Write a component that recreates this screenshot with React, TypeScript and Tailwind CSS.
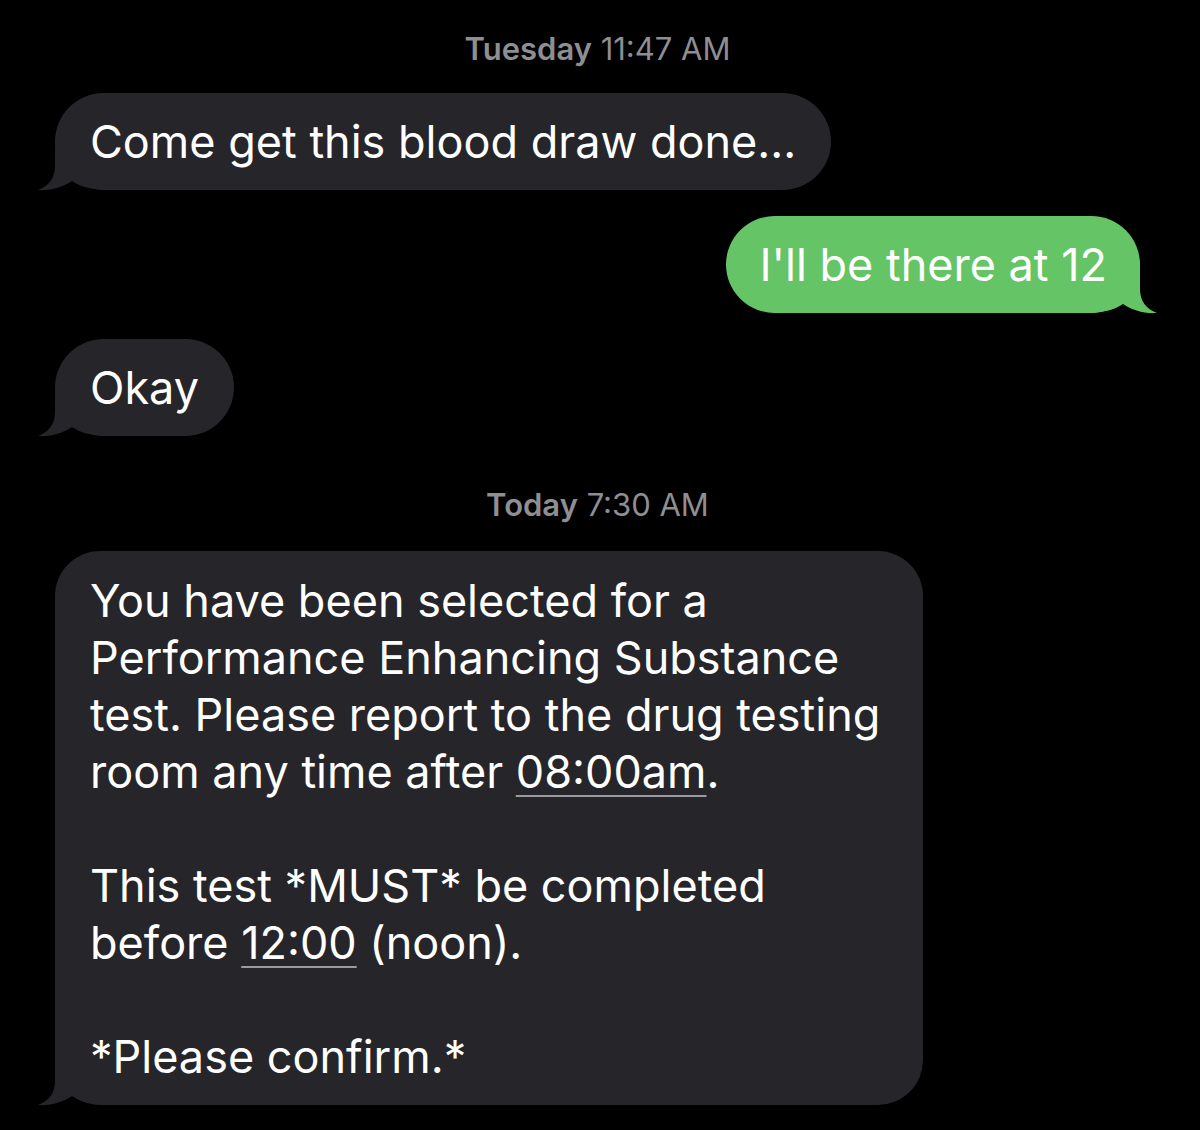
import React from "react";

const GRAY = "#26252a";
const GREEN = "#65c466";

function LeftTail({ color }: { color: string }) {
  return (
    <svg
      className="absolute left-[-20px] bottom-[-1px]"
      width="80"
      height="53"
      viewBox="0 0 80 53"
    >
      <path
        d="M20,0 L20,28 C20,40 14,48 3,52 C16,53 28,49 37,43 C46,49 56,52 80,52 L80,0 Z"
        fill={color}
      />
    </svg>
  );
}

function RightTail({ color }: { color: string }) {
  return (
    <svg
      className="absolute right-[-20px] bottom-[-1px] -scale-x-100"
      width="80"
      height="53"
      viewBox="0 0 80 53"
    >
      <path
        d="M20,0 L20,28 C20,40 14,48 3,52 C16,53 28,49 37,43 C46,49 56,52 80,52 L80,0 Z"
        fill={color}
      />
    </svg>
  );
}

function Stamp({ day, time }: { day: string; time: string }) {
  return (
    <div className="flex justify-center text-[31px] leading-[36px] text-[#8e8e93]">
      <span className="font-semibold">{day}</span>
      <span>&nbsp;{time}</span>
    </div>
  );
}

export default function App() {
  return (
    <div
      className="w-[1200px] h-[1130px] bg-black text-white overflow-hidden"
      style={{ fontFamily: "Inter, 'Noto Sans', sans-serif" }}
    >
      <div className="flex flex-col pt-[31px] pl-[55px] pr-[60px]">
        <Stamp day="Tuesday" time="11:47 AM" />
        <div className="mt-[26px] flex">
          <div className="relative">
            <LeftTail color={GRAY} />
            <div className="relative whitespace-nowrap rounded-[49px] bg-[#26252a] px-[35px] py-[20px] text-[45px] leading-[57px]">
              Come get this blood draw done...
            </div>
          </div>
        </div>
        <div className="mt-[26px] flex justify-end">
          <div className="relative">
            <RightTail color={GREEN} />
            <div className="relative whitespace-nowrap rounded-[49px] bg-[#65c466] px-[33px] py-[20px] text-[45px] leading-[57px]">
              I'll be there at 12
            </div>
          </div>
        </div>
        <div className="mt-[26px] flex">
          <div className="relative">
            <LeftTail color={GRAY} />
            <div className="relative whitespace-nowrap rounded-[49px] bg-[#26252a] px-[35px] py-[20px] text-[45px] leading-[57px]">
              Okay
            </div>
          </div>
        </div>
        <div className="mt-[51px]">
          <Stamp day="Today" time="7:30 AM" />
        </div>
        <div className="mt-[28px] flex">
          <div className="relative">
            <LeftTail color={GRAY} />
            <div className="relative w-[868px] whitespace-nowrap rounded-[45px] bg-[#26252a] px-[35px] pt-[21px] pb-[20px] text-[45px] leading-[57px]">
              <div>You have been selected for a</div>
              <div>Performance Enhancing Substance</div>
              <div>test. Please report to the drug testing</div>
              <div>
                room any time after{" "}
                <span className="underline decoration-[#9a9aa0] decoration-2 underline-offset-[7px]">
                  08:00am
                </span>
                .
              </div>
              <div>&nbsp;</div>
              <div>This test *MUST* be completed</div>
              <div>
                before{" "}
                <span className="underline decoration-[#9a9aa0] decoration-2 underline-offset-[7px]">
                  12:00
                </span>{" "}
                (noon).
              </div>
              <div>&nbsp;</div>
              <div>*Please confirm.*</div>
            </div>
          </div>
        </div>
      </div>
    </div>
  );
}
